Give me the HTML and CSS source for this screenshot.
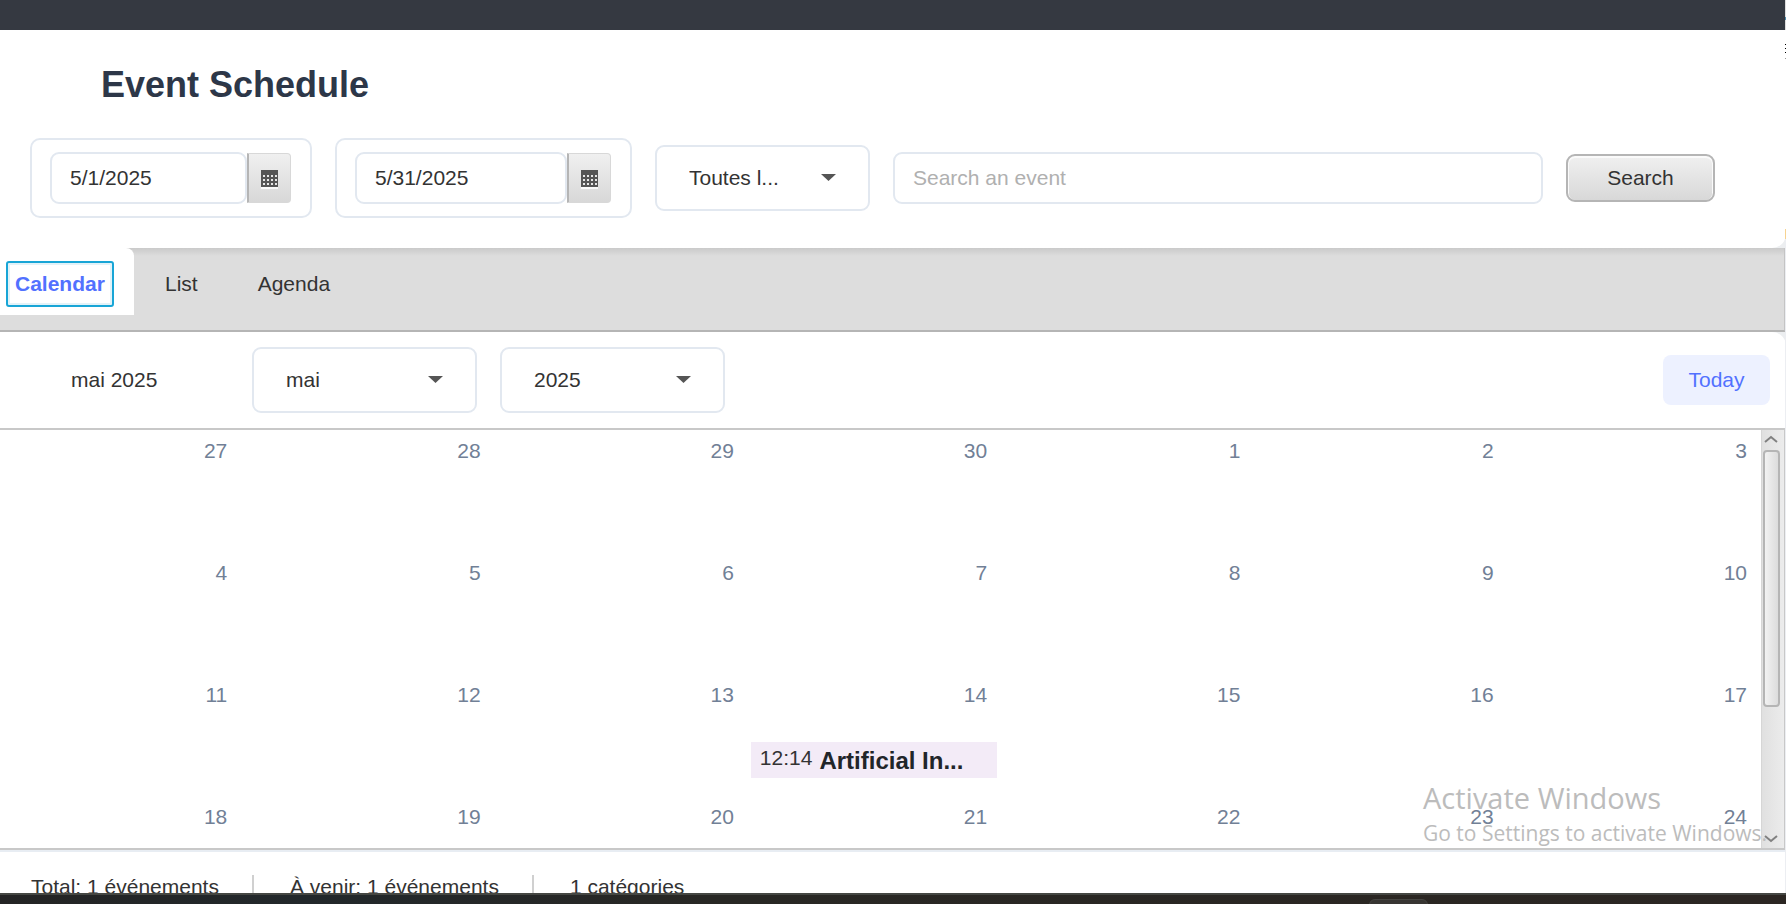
FILE: index.html
```html
<!DOCTYPE html>
<html lang="en">
<head>
<meta charset="utf-8">
<title>Event Schedule</title>
<link rel="stylesheet" href="styles.css">
</head>
<body>
<div class="app">
  <div class="titlebar"></div>
  <header class="header">
    <h1 class="title">Event Schedule</h1>
    <form class="filters">
      <div class="date date-from">
        <input class="field date-input" type="text" value="5/1/2025" aria-label="Start date">
        <button class="date-button" type="button" aria-label="Pick start date">
          <svg width="17" height="19" viewBox="0 0 17 19"><path fill="#fff" opacity=".8" d="M0 17h17v2H0z"/><path fill="#555" d="M0 0h17v17H0z"/><path stroke="#e6e6e6" stroke-width="2" stroke-dasharray="2 2" d="M2 6h14M2 10h14M2 14h14"/></svg>
        </button>
      </div>
      <div class="date date-to">
        <input class="field date-input" type="text" value="5/31/2025" aria-label="End date">
        <button class="date-button" type="button" aria-label="Pick end date">
          <svg width="17" height="19" viewBox="0 0 17 19"><path fill="#fff" opacity=".8" d="M0 17h17v2H0z"/><path fill="#555" d="M0 0h17v17H0z"/><path stroke="#e6e6e6" stroke-width="2" stroke-dasharray="2 2" d="M2 6h14M2 10h14M2 14h14"/></svg>
        </button>
      </div>
      <div class="combo combo-category">
        <select class="combo-select" aria-label="Category"><option>Toutes l...</option></select>
      </div>
      <input class="field search" type="text" placeholder="Search an event" aria-label="Search an event">
      <button class="search-button" type="button">Search</button>
    </form>
  </header>
  <nav class="tabs" role="tablist">
    <button class="tab tab-active" role="tab" aria-selected="true"><span class="tab-focus">Calendar</span></button>
    <button class="tab" role="tab">List</button>
    <button class="tab" role="tab">Agenda</button>
  </nav>
  <div class="monthbar">
    <span class="month-label">mai 2025</span>
    <div class="combo"><select class="combo-select" aria-label="Month"><option>mai</option></select></div>
    <div class="combo"><select class="combo-select" aria-label="Year"><option>2025</option></select></div>
    <button class="today" type="button">Today</button>
  </div>
  <main class="calendar">
    <div class="viewport">
      <table class="month">
        <tbody>
          <tr><td>27</td><td>28</td><td>29</td><td>30</td><td>1</td><td>2</td><td>3</td></tr>
          <tr><td>4</td><td>5</td><td>6</td><td>7</td><td>8</td><td>9</td><td>10</td></tr>
          <tr><td>11</td><td>12</td><td>13</td><td>14
            <div class="event"><span class="event-time">12:14</span><strong class="event-name">Artificial In...</strong></div>
          </td><td>15</td><td>16</td><td>17</td></tr>
          <tr><td>18</td><td>19</td><td>20</td><td>21</td><td>22</td><td>23</td><td>24</td></tr>
        </tbody>
      </table>
    </div>
    <div class="scrollbar">
      <svg class="scroll-arrow" width="16" height="10" viewBox="0 0 16 10"><path fill="none" stroke="#808080" stroke-width="2" d="M2 8l6-5 6 5"/></svg>
      <div class="track"><div class="thumb"></div></div>
      <svg class="scroll-arrow" width="16" height="10" viewBox="0 0 16 10"><path fill="none" stroke="#808080" stroke-width="2" d="M2 2l6 5 6-5"/></svg>
    </div>
  </main>
  <footer class="stats">
    <span class="stat">Total: 1 événements</span>
    <span class="stat">À venir: 1 événements</span>
    <span class="stat">1 catégories</span>
  </footer>
  <div class="taskbar"><div class="taskbar-item"></div></div>
  <div class="edge"></div>
  <div class="watermark">
    <p class="watermark-title">Activate Windows</p>
    <p class="watermark-text">Go to Settings to activate Windows.</p>
  </div>
</div>
</body>
</html>
```

FILE: styles.css
```css
* { box-sizing: border-box; }

body {
  margin: 0;
  font: 21px/24px "Liberation Sans", Arial, sans-serif;
  color: #333;
  background: #fff;
}

button, input, select { font: inherit; color: inherit; margin: 0; }

.app {
  position: relative;
  display: flex;
  flex-direction: column;
  height: 100vh;
  overflow: hidden;
  background: #eceef0;
}

.titlebar { flex: none; height: 30px; background: #353941; }

.header {
  flex: none;
  padding: 35px 71px 30px 30px;
  background: #fff;
  border-bottom-right-radius: 14px;
}

.title {
  margin: 0 0 33px 71px;
  font-size: 36px;
  line-height: 40px;
  color: #2d3748;
}

.filters { display: flex; align-items: center; gap: 23px; }

.field {
  height: 52px;
  padding: 0 18px;
  border: 2px solid #e2e8f0;
  border-radius: 9px;
  background: #fff;
  outline: none;
}

.date {
  display: flex;
  align-items: center;
  padding: 12px 19px 12px 18px;
  border: 2px solid #e2e8f0;
  border-radius: 10px;
}
.date-from { width: 282px; }
.date-to { width: 297px; }
.date-input { flex: 1; min-width: 0; }

.date-button {
  display: flex;
  align-items: center;
  justify-content: center;
  width: 44px;
  height: 50px;
  padding: 2px 0 0;
  border: 1px solid #d8d8d8;
  border-left: 2px solid #b5b5b5;
  border-radius: 0 4px 4px 0;
  background: linear-gradient(#f0f0f0, #d8d8d8);
}

.combo { position: relative; width: 225px; }
.combo-category { width: 215px; }
.combo::after {
  content: "";
  position: absolute;
  right: 34px;
  top: 29px;
  width: 15px;
  height: 7px;
  background: #555;
  clip-path: polygon(0 0, 100% 0, 50% 100%);
  pointer-events: none;
}
.combo-select {
  display: block;
  width: 100%;
  height: 66px;
  padding: 0 32px;
  border: 2px solid #e2e8f0;
  border-radius: 9px;
  background: #fff;
  appearance: none;
}

.search { flex: 1; min-width: 0; }
.search::placeholder { color: #b0b0b0; opacity: 1; }

.search-button {
  width: 149px;
  height: 48px;
  border: 2px solid #b5b5b5;
  border-radius: 9px;
  background: linear-gradient(#f0f0f0, #d8d8d8);
  box-shadow: inset 0 1px 0 1px #fafafa;
}

.tabs {
  flex: none;
  display: flex;
  align-items: flex-start;
  height: 84px;
  border-right: 2px solid #c4c4c4;
  border-bottom: 2px solid #b5b5b5;
  background: linear-gradient(#cacaca, #ddd 8px);
}
.tab {
  height: 72px;
  padding: 0 29px 0 31px;
  border: 0;
  background: none;
}
.tab-active {
  height: 67px;
  width: 134px;
  padding: 5px 0 0 6px;
  border-top-right-radius: 8px;
  background: #fff;
  color: #5271ff;
  font-weight: bold;
  text-align: left;
}
.tab-focus {
  display: inline-block;
  padding: 9px 7px;
  border: 2px solid #18a5d6;
  border-radius: 3px;
  box-shadow: inset 0 0 0 2px #e2f2f8;
}

.monthbar {
  flex: none;
  display: flex;
  align-items: center;
  gap: 23px;
  height: 96px;
  padding: 0 16px 0 71px;
  border-top-right-radius: 14px;
  background: #fff;
}
.month-label { width: 158px; }
.today {
  width: 107px;
  height: 50px;
  margin-left: auto;
  border: 0;
  border-radius: 8px;
  background: #edf1ff;
  color: #5271ff;
}

.calendar {
  flex: 1;
  min-height: 0;
  display: flex;
  border: 2px solid #c8c8c8;
  border-left: 0;
  background: #fff;
}
.viewport { flex: 1; overflow: hidden; }
.month {
  width: calc(100% + 12px);
  margin-left: -12px;
  table-layout: fixed;
  border-collapse: collapse;
}
.month td {
  height: 122px;
  padding: 9px 14px 0 0;
  text-align: right;
  vertical-align: top;
  color: #718096;
}
.event {
  display: flex;
  gap: 7px;
  height: 36px;
  margin: 35px -10px 0 3px;
  padding: 4px 9px;
  background: #f3ebf7;
  text-align: left;
  white-space: nowrap;
}
.event-time { color: #333; }
.event-name { font-size: 24px; line-height: 30px; color: #212529; }

.scrollbar {
  display: flex;
  flex-direction: column;
  align-items: center;
  width: 23px;
  padding: 4px 4px 4px 0;
  border-left: 1px solid #d6d6d6;
  background: linear-gradient(90deg, #e0e0e0, #ececec);
}
.track { flex: 1; padding: 6px 0; }
.thumb {
  width: 17px;
  height: 257px;
  border: 2px solid #b5b5b5;
  border-radius: 4px;
  background: linear-gradient(90deg, #f2f2f2, #dcdcdc);
}

.stats {
  flex: none;
  display: flex;
  height: 43px;
  padding: 23px 31px 0;
  overflow: hidden;
  border-top: 2px solid #e8edf3;
  background: #fff;
}
.stat { height: 32px; white-space: nowrap; }
.stat + .stat {
  margin-left: 33px;
  padding-left: 36px;
  border-left: 2px solid #d0d0d0;
}

.taskbar {
  flex: none;
  display: flex;
  justify-content: flex-end;
  height: 11px;
  padding: 4px 358px 0 0;
  border-top: 2px solid #454743;
  background: linear-gradient(90deg, #242424, #22282b 17%, #282724 40%, #2b2622);
  overflow: hidden;
}
.taskbar-item {
  width: 59px;
  height: 12px;
  border: 1px solid #454441;
  border-radius: 6px;
  background: #373532;
}

.edge {
  position: absolute;
  top: 0;
  right: 0;
  width: 1px;
  height: 893px;
  background: linear-gradient(#ddd 17px, #4c8aab 17px 20px, #ddd 20px 30px, #fff 30px 44px, #000 44px 45px, #fff 45px 48px, #000 48px 49px, #fff 49px 52px, #000 52px 53px, #fff 53px 58px, #999 58px 59px, #fff 59px 229px, #f7d391 229px 239px, #eceef2 239px);
}

.watermark {
  position: absolute;
  right: 20px;
  bottom: 56px;
  width: 343px;
  font-family: "Open Sans", "Noto Sans", sans-serif;
  color: #bcbcbc;
  white-space: nowrap;
  pointer-events: none;
}
.watermark p { margin: 0; }
.watermark-title { font-size: 29px; line-height: 40px; }
.watermark-text { font-size: 21px; line-height: 30px; }
```
